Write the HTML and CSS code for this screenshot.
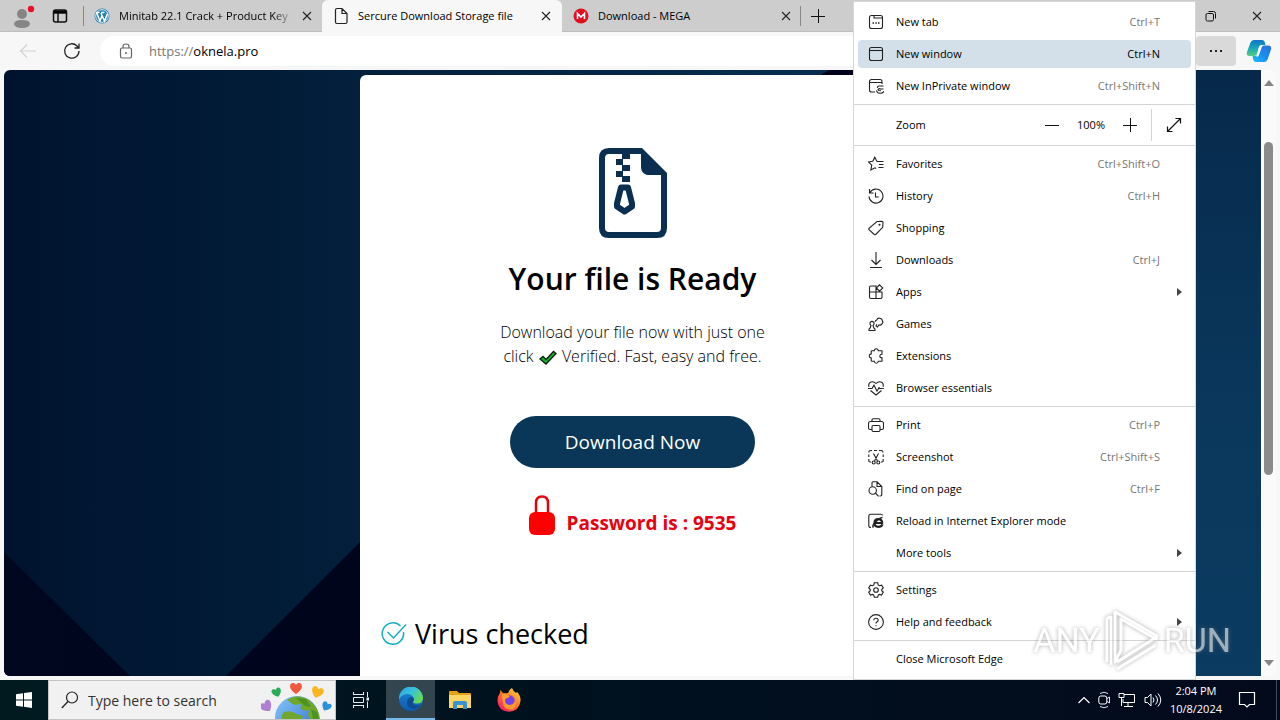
FILE: index.html
```html
<!DOCTYPE html>
<html lang="en">
<head>
    <meta charset="UTF-8">
    <title>Sercure Download Storage file</title>
    <link rel="stylesheet" href="styles.css">
</head>
<body>
    <!-- shared icons -->
    <svg class="sprite" aria-hidden="true">
        <symbol id="i-close" viewBox="0 0 10 10"><path d="M1 1l8 8M9 1l-8 8"/></symbol>
        <symbol id="i-newtab" viewBox="0 0 16 16"><rect x="1.5" y="1.5" width="13" height="13" rx="2"/><path d="M6 1.500v2.500h8.500"/><path d="M4.500 9h1.500M7.300 9h1.500M10 9h1.500" stroke-width="1.500"/></symbol>
        <symbol id="i-window" viewBox="0 0 16 16"><rect x="1.500" y="1.500" width="13" height="13" rx="2"/><path d="M1.500 4.500h13"/></symbol>
        <symbol id="i-private" viewBox="0 0 16 16"><path d="M7 14H3.500a2 2 0 0 1-2-2V3.500a2 2 0 0 1 2-2h8.500a2 2 0 0 1 2 2V6M1.500 4.500H14M15.500 8h-4q-2.500.2-2 1.800M15.500 11h-3q-1-.8-2 0t.5 1.500l2 .2M8.500 12.500q.5 2.700 3.500 2.800t4-2"/></symbol>
        <symbol id="i-star" viewBox="0 0 16 16"><path d="M9 5.500h6.500M11 8.500h4.500M10.500 11.500h5M9 5.500L6.800 1.200 4.800 5.300.5 6l3.200 3.200-.8 4.800 4-2.200 1.300.7"/></symbol>
        <symbol id="i-history" viewBox="0 0 16 16"><path d="M1.500 1v4h4M1.800 4.800A7 7 0 1 1 1 8.500M7.500 4.500V9h3.300"/></symbol>
        <symbol id="i-tag" viewBox="0 0 16 16"><path d="M9 1.500l5-.2q1 0 1 1l-.3 5-7 7.200q-.7.500-1.400 0L1 9.700q-.5-.7 0-1.400z"/><circle cx="11.500" cy="4.700" r=".5"/></symbol>
        <symbol id="i-down" viewBox="0 0 16 16"><path d="M8 0v12M3.500 8L8 12.500 12.500 8M2 15.500h12"/></symbol>
        <symbol id="i-apps" viewBox="0 0 16 16"><path d="M8 8V2H3a1.500 1.500 0 0 0-1.500 1.500v9.500A1.500 1.500 0 0 0 3 14.500h9.500A1.500 1.500 0 0 0 14 13V8zM1.500 8H8v6.500M11.500.8l3.300 3.200-3.300 3.200L8.300 4z"/></symbol>
        <symbol id="i-games" viewBox="0 0 16 16"><path d="M1 14.500q-.3-2 1.200-2.500l.8-2.500Q1.300 8 2.300 6.300 4 4.500 5.700 6.300 6.700 8 5 9.500l.8 2.500q1.500.5 1.200 2.500zM7 6q.3-1.800 1.800-2 .7-2.300 3-1.800 2.500.5 2.500 2.600 1.200 1.500-.3 3-1.300 1.700-3 1.200L9.500 11 8 10l.8-1.800"/></symbol>
        <symbol id="i-puzzle" viewBox="0 0 16 16"><path d="M4 2.800h2.300q.2-2 2-2t2 2H14v3.500q-2 0-2.200 1.700T14 9.700v3.500h-3.700q-.2 2-2 2t-2-2H4q-.8 0-.8-.8v-2.500q-2-.2-2-2t2-2V3.500q0-.7.800-.7z"/></symbol>
        <symbol id="i-heart" viewBox="0 0 16 16"><path d="M1 6.800q-1-3 1.300-4.600Q5.500.8 8 3.500 10.500.8 13.700 2.200 16 3.800 15 6.800M2.500 10.500L8 15l5.500-4.500M0 8.500h4L6 5.200l3 6 2-3.500.8.800h4"/></symbol>
        <symbol id="i-print" viewBox="0 0 16 16"><path d="M4 4.500V3q0-1.200 1.200-1.200h5.600Q12 1.800 12 3v1.500M4 12.500H2Q.5 12.500.5 11V6.500q0-2 2-2h11q2 0 2 2V11q0 1.500-1.500 1.500h-2"/><rect x="4" y="8.500" width="8" height="6" rx="1.200"/></symbol>
        <symbol id="i-shot" viewBox="0 0 16 16"><path d="M3 13H2.200Q.8 13 .8 11.500V10M.8 8V5.500M.8 3.500q0-2 2-2H4M6 1.500h3M11 1.500h2q2 0 2 2M15.200 5.500V8M15.200 10v1.500q0 1.500-1.500 1.500H13M5.500 4.500L9.500 12M10.500 4.500L6.500 12"/><circle cx="5.700" cy="13.500" r="1.500"/><circle cx="10.300" cy="13.500" r="1.500"/></symbol>
        <symbol id="i-find" viewBox="0 0 16 16"><path d="M4 5.500V2Q4 .8 5.200.8H9L13.800 5.500v8q0 1.500-1.500 1.500H11.500M9 .8V5.500h4.800M7.300 12l3.300 3.300"/><circle cx="4.700" cy="9.500" r="3.700"/></symbol>
        <symbol id="i-ie" viewBox="0 0 16 16"><path d="M3 14.500q-2.200 0-2.200-2V3.200q0-2 2-2h10q1.500 0 1.800 1.200"/><path d="M14.500 11.300q-1 2.500-4.200 2.500-3.800 0-3.800-3.800t3.800-3.800q3.800 0 3.800 3.800H7" stroke-width="2.200"/><path d="M5.500 14.500q-2-1.200 2-5.500t7-4.500" stroke-width="1.500"/></symbol>
        <symbol id="i-gear" viewBox="0 0 16 16"><path d="M6.300.8h3.400l.5 2.100 1.300.8 2.100-.6 1.700 2.900-1.600 1.500v1.200l1.600 1.400-1.700 3-2.100-.7-1.300.8-.5 2H6.300l-.5-2-1.300-.8-2.100.7-1.700-3L2.300 8.700V7.500L.7 6l1.700-2.900 2.100.6 1.300-.8z"/><circle cx="8" cy="8" r="2.300"/></symbol>
        <symbol id="i-help" viewBox="0 0 16 16"><circle cx="8" cy="8" r="7.400"/><path d="M5.800 6.200q.1-2 2.200-2t2.200 1.800Q10.200 7.200 8.800 8 8 8.500 8 9.500M8 11.200v1"/></symbol>
    </svg>

    <div class="browser">
        <div class="tabbar">
            <button class="profile" aria-label="Profile">
                <svg width="24" height="26" viewBox="0 0 24 26"><circle cx="11" cy="11" r="5" fill="#858585"/><path d="M3 21q0-4 8-4t8 4q-1 4-8 4t-8-4z" fill="#858585"/><circle cx="20" cy="6" r="3.200" fill="#e81123"/></svg>
            </button>
            <button class="workspace" aria-label="Tab actions">
                <svg width="16" height="16" viewBox="0 0 16 16"><rect x="1.500" y="2" width="13" height="12" rx="2" fill="none" stroke="#111" stroke-width="1.500"/><path d="M1.500 5h13M6 5v9" stroke="#111" stroke-width="1.500"/><path d="M2 2.500h12V5H2z"/></svg>
            </button>
            <div class="tab tab-first">
                <svg width="18" height="18" viewBox="0 0 18 18"><circle cx="9" cy="9" r="7.500" fill="#207db5"/><circle cx="9" cy="9" r="6.300" fill="none" stroke="#e6eff4"/><path d="M3.500 5.500L7 14l2-5.500L11.500 14l3-7.500M3 5.500h3.500M8 5.500h3.500M9 8.500L8 6" fill="none" stroke="#fff" stroke-width="1.500"/></svg>
                <span class="tab-title fade">Minitab 22.1 Crack + Product Key</span>
                <button class="x" aria-label="Close tab"><svg class="ico"><use href="#i-close"/></svg></button>
            </div>
            <div class="tab active">
                <svg width="18" height="18" viewBox="0 0 18 18"><path d="M3.500 3q0-1.500 1.500-1.500h5l5 5V15q0 1.500-1.500 1.500H5q-1.500 0-1.500-1.500zM10 1.500v5h5" fill="none" stroke="#222" stroke-width="1.200"/></svg>
                <span class="tab-title">Sercure Download Storage file</span>
                <button class="x" aria-label="Close tab"><svg class="ico"><use href="#i-close"/></svg></button>
            </div>
            <div class="tab">
                <svg width="18" height="18" viewBox="0 0 18 18"><circle cx="9" cy="9" r="7.500" fill="#e01020"/><path d="M5.500 12V6.500L9 10l3.500-3.500V12" fill="none" stroke="#fff" stroke-width="1.600"/></svg>
                <span class="tab-title">Download - MEGA</span>
                <button class="x" aria-label="Close tab"><svg class="ico"><use href="#i-close"/></svg></button>
            </div>
            <button class="add" aria-label="New tab"><svg width="14" height="14" viewBox="0 0 14 14"><path d="M7.500 0v14M0 7.500h14" stroke="#111"/></svg></button>
            <div class="winbtns">
                <button aria-label="Restore"><svg width="12" height="12" viewBox="0 0 12 12"><rect x="1" y="3.500" width="7.500" height="7.500" rx="1.500" fill="none" stroke="#111"/><path d="M3.500 1.500h5q2 0 2 2v5" fill="none" stroke="#111"/></svg></button>
                <button aria-label="Close"><svg class="ico"><use href="#i-close"/></svg></button>
            </div>
        </div>

        <div class="toolbar">
            <button class="nav" aria-label="Back"><svg width="18" height="16" viewBox="0 0 18 16"><path d="M8 1.500L1.500 8 8 14.500M1.500 8H17" fill="none" stroke="#d2d2d2" stroke-width="1.200"/></svg></button>
            <button class="nav" aria-label="Refresh"><svg width="18" height="18" viewBox="0 0 18 18"><path d="M16 9a7.200 7.200 0 1 1-2-5l2 2M16 1.500V6h-4.500" fill="none" stroke="#222" stroke-width="1.300"/></svg></button>
            <div class="address">
                <svg width="14" height="16" viewBox="0 0 14 16"><path d="M4 5V3.500Q4 1 7 1t3 2.500V5" fill="none" stroke="#666" stroke-width="1.200"/><rect x="1.500" y="5" width="11" height="10" rx="1.500" fill="none" stroke="#666" stroke-width="1.200"/><circle cx="7" cy="10" r="1" fill="#666"/></svg>
                <label for="url">https://</label>
                <input id="url" type="text" value="oknela.pro">
            </div>
            <button class="more" aria-label="Settings and more"><i></i><i></i><i></i></button>
            <button class="copilot" aria-label="Copilot">
                <svg width="26" height="24" viewBox="0 0 26 24">
                    <defs>
                        <linearGradient id="cpA" x1="0" y1="0" x2="0" y2="1"><stop offset="0" stop-color="#1473c9"/><stop offset=".5" stop-color="#15a7b8"/><stop offset="1" stop-color="#53cf82"/></linearGradient>
                        <linearGradient id="cpB" x1="1" y1="0" x2="0" y2="1"><stop offset="0" stop-color="#2b6fd6"/><stop offset=".5" stop-color="#1b8cf0"/><stop offset="1" stop-color="#22bdf5"/></linearGradient>
                    </defs>
                    <path d="M8 1h8q2 0 2.700 2l.8 3h-4q-2 0-2.600 2L11 15q-.8 2-3 2H3.500Q0 17 1 13L4.500 3.500Q5.500 1 8 1z" fill="url(#cpA)"/>
                    <path d="M18 23h-8q-2 0-2.700-2l-.8-4h3q2 0 2.700-2L15 8.500q.8-2 3-2h4q4 0 3 4L21.500 20.500Q20.500 23 18 23z" fill="url(#cpB)"/>
                    <path d="M13 8q.6-1.500 2.300-1.500h2.200q-1.500.5-2 2.200L13 16q-.6 2-2.800 2 .8-.7 1-2z" fill="#fff"/>
                </svg>
            </button>
        </div>

        <div class="view">
            <main class="page">
                <svg class="backdrop" viewBox="0 0 1257 606" preserveAspectRatio="none" aria-hidden="true">
                    <defs>
                        <linearGradient id="bgL" x1="0" y1="0" x2="1" y2="0"><stop offset="0" stop-color="#00132e"/><stop offset=".3" stop-color="#03203c"/><stop offset="1" stop-color="#0c3a60"/></linearGradient>
                        <linearGradient id="bgR" x1="0" y1="0" x2="0" y2="1"><stop offset="0" stop-color="#06294a"/><stop offset=".5" stop-color="#0a365b"/><stop offset="1" stop-color="#0b3b61"/></linearGradient>
                        <linearGradient id="bgD" x1="0" y1="0" x2="1" y2="0"><stop offset="0" stop-color="#00071f"/><stop offset="1" stop-color="#000218"/></linearGradient>
                    </defs>
                    <rect width="1257" height="606" fill="url(#bgL)"/>
                    <path d="M900 0h357v606H900z" fill="url(#bgR)"/>
                    <path d="M0 482l126 124H0zM222 606L356 472 900 0h-75l-10 6v600z" fill="url(#bgD)"/>
                </svg>
                <section class="card">
                    <svg class="zip" width="68" height="90" viewBox="0 0 68 90">
                        <path d="M43 3H10Q3 3 3 10v70q0 7 7 7h48q7 0 7-7V25" fill="none" stroke="#0a2f50" stroke-width="6"/>
                        <path d="M40 0h3l25 25v2H48q-6-2-6-8V3z" fill="#0a2f50"/>
                        <path d="M23 5h8v6h-8zM17 11h7v6h-7zM23 17h8v6h-8zM17 23h7v6h-7zM23 28h8v6h-8z" fill="#0a2f50"/>
                        <path d="M22 39.500h7l4 16v3l-7.500 5-7.500-5v-3z" fill="none" stroke="#0a2f50" stroke-width="6" stroke-linejoin="round"/>
                    </svg>
                    <h1>Your file is Ready</h1>
                    <p class="lead">Download your file now with just one<br>click
                        <svg width="20" height="16" viewBox="0 0 20 16"><path d="M2 9l3-2.500 3 3L15.500 1.500l2.500 2L8 14z" fill="#17b02c" stroke="#0b2010" stroke-width="1.300"/></svg>
                        Verified. Fast, easy and free.</p>
                    <button class="download">Download Now</button>
                    <div class="password">
                        <svg width="26" height="40" viewBox="0 0 26 40"><path d="M7 18V8q0-6.500 6-6.500T19 8v10" fill="none" stroke="#e8000f" stroke-width="2.500"/><rect y="17" width="26" height="23" rx="6" fill="#f00"/></svg>
                        <strong>Password is : 9535</strong>
                    </div>
                    <div class="virus">
                        <svg width="26" height="24" viewBox="0 0 26 24"><path d="M19.500 4A10.700 10.700 0 1 0 22.500 10M6.500 10l6 6L25 2.500" fill="none" stroke="#16b0bd" stroke-width="1.500"/></svg>
                        <h2>Virus checked</h2>
                    </div>
                </section>
            </main>
            <div class="scrollbar">
                <svg width="10" height="6" viewBox="0 0 10 6"><path d="M0 6l5-6 5 6z" fill="#858585"/></svg>
                <div class="track"><div class="thumb"></div></div>
                <svg width="10" height="6" viewBox="0 0 10 6"><path d="M0 0l5 6 5-6z" fill="#858585"/></svg>
            </div>
        </div>
    </div>

    <nav class="menu">
        <div class="group">
            <button class="item"><svg class="ico"><use href="#i-newtab"/></svg><span>New tab</span><kbd>Ctrl+T</kbd></button>
            <button class="item on"><svg class="ico"><use href="#i-window"/></svg><span>New window</span><kbd>Ctrl+N</kbd></button>
            <button class="item"><svg class="ico"><use href="#i-private"/></svg><span>New InPrivate window</span><kbd>Ctrl+Shift+N</kbd></button>
        </div>
        <div class="group zoom">
            <span class="zoom-label">Zoom</span>
            <button aria-label="Zoom out"><svg width="14" height="14" viewBox="0 0 14 14"><path d="M0 7.500h14" stroke="#111"/></svg></button>
            <span class="percent">100%</span>
            <button aria-label="Zoom in"><svg width="14" height="14" viewBox="0 0 14 14"><path d="M0 7.500h14M7.500 0v14" stroke="#111"/></svg></button>
            <button class="full" aria-label="Full screen"><svg width="16" height="16" viewBox="0 0 16 16"><path d="M1.500 14.500l13-13M9.500 1.500h5v5M1.500 9.500v5h5" fill="none" stroke="#111" stroke-width="1.200"/></svg></button>
        </div>
        <div class="group">
            <button class="item"><svg class="ico"><use href="#i-star"/></svg><span>Favorites</span><kbd>Ctrl+Shift+O</kbd></button>
            <button class="item"><svg class="ico"><use href="#i-history"/></svg><span>History</span><kbd>Ctrl+H</kbd></button>
            <button class="item"><svg class="ico"><use href="#i-tag"/></svg><span>Shopping</span></button>
            <button class="item"><svg class="ico"><use href="#i-down"/></svg><span>Downloads</span><kbd>Ctrl+J</kbd></button>
            <button class="item sub"><svg class="ico"><use href="#i-apps"/></svg><span>Apps</span></button>
            <button class="item"><svg class="ico"><use href="#i-games"/></svg><span>Games</span></button>
            <button class="item"><svg class="ico"><use href="#i-puzzle"/></svg><span>Extensions</span></button>
            <button class="item"><svg class="ico"><use href="#i-heart"/></svg><span>Browser essentials</span></button>
        </div>
        <div class="group">
            <button class="item"><svg class="ico"><use href="#i-print"/></svg><span>Print</span><kbd>Ctrl+P</kbd></button>
            <button class="item"><svg class="ico"><use href="#i-shot"/></svg><span>Screenshot</span><kbd>Ctrl+Shift+S</kbd></button>
            <button class="item"><svg class="ico"><use href="#i-find"/></svg><span>Find on page</span><kbd>Ctrl+F</kbd></button>
            <button class="item"><svg class="ico"><use href="#i-ie"/></svg><span>Reload in Internet Explorer mode</span></button>
            <button class="item sub"><svg class="ico"></svg><span>More tools</span></button>
        </div>
        <div class="group">
            <button class="item"><svg class="ico"><use href="#i-gear"/></svg><span>Settings</span></button>
            <button class="item sub"><svg class="ico"><use href="#i-help"/></svg><span>Help and feedback</span></button>
        </div>
        <div class="group">
            <button class="item"><svg class="ico"></svg><span>Close Microsoft Edge</span></button>
        </div>
    </nav>

    <div class="watermark">
        <span>ANY</span>
        <svg width="58" height="64" viewBox="0 0 58 64"><path d="M4 54V12q0-3 4-3v48M12 54V4l42 24-1 3-35-20v31zM14 61l39-24M14 54l38-24" fill="none" stroke="#fff" stroke-width="3" stroke-linejoin="round"/></svg>
        <span>RUN</span>
    </div>

    <footer class="taskbar">
        <button class="start" aria-label="Start"><svg width="16" height="16" viewBox="0 0 16 16"><path d="M0 2.300L7 1.200v6.300H0zM8 1l8-1v7.500H8zM0 8.500h7v6.300l-7-1zM8 8.500h8V16l-8-1.200z" fill="#fff"/></svg></button>
        <div class="search">
            <svg width="18" height="18" viewBox="0 0 18 18"><circle cx="11" cy="6.500" r="5.500" fill="none" stroke="#222" stroke-width="1.200"/><path d="M7 10.500L.8 17" stroke="#222" stroke-width="1.300"/></svg>
            <input type="text" placeholder="Type here to search" aria-label="Search">
            <svg width="72" height="38" viewBox="0 0 72 38">
                <defs><linearGradient id="sea" x1="0" y1="0" x2="1" y2="1"><stop offset="0" stop-color="#86c9f7"/><stop offset="1" stop-color="#2a63d8"/></linearGradient>
                <path id="love" d="M0 5C-9-1-6-7-2.500-6Q-.5-5.500 0-4 .5-5.500 2.500-6C6-7 9-1 0 5z"/></defs>
                <circle cx="36" cy="37" r="22" fill="url(#sea)"/>
                <path d="M26 19q10-7 22 0 10 8 11 19H49q-4-5 0-9-7 2-10-2l2-4-8 1-4-3zM23 31q8-2 12 2l7 2-1 3H21q-1-4 2-7z" fill="#71a82c"/>
                <path d="M35 17l10 1 5 8-6-1zM50 28l6 3 2 7h-6z" fill="#4c931f"/>
                <use href="#love" transform="translate(35 8)" fill="#f1583c"/>
                <use href="#love" transform="translate(16 12) rotate(-20) scale(.8)" fill="#2cab57"/>
                <use href="#love" transform="translate(56 12) rotate(20)" fill="#f9b620"/>
                <use href="#love" transform="translate(6 26) rotate(-35)" fill="#ad80d4"/>
                <use href="#love" transform="translate(65 26) rotate(30) scale(.8)" fill="#2a91dc"/>
            </svg>
        </div>
        <button class="app" aria-label="Task View"><svg width="18" height="18" viewBox="0 0 18 18"><path d="M1.500 1v3M11.500 1v3M1.500 3.500h10M1.500 17v-3M11.500 17v-3M1.500 14.500h10M1.500 6.500h10v5h-10zM15.500 1v5M15.500 10.500V17" fill="none" stroke="#e8eef0"/><path d="M14.500 6.500h2.500v3h-2.500z" fill="#e8eef0"/></svg></button>
        <button class="app current" aria-label="Microsoft Edge">
            <svg width="24" height="24" viewBox="0 0 24 24">
                <defs><linearGradient id="edA" x1="0" y1="0" x2="1" y2=".6"><stop offset="0" stop-color="#2aa0e2"/><stop offset=".5" stop-color="#36c2dc"/><stop offset="1" stop-color="#65da58"/></linearGradient>
                <linearGradient id="edB" x1="0" y1="0" x2="0" y2="1"><stop offset="0" stop-color="#1a8ad8"/><stop offset="1" stop-color="#0c59b0"/></linearGradient></defs>
                <circle cx="12" cy="12" r="12" fill="url(#edB)"/>
                <path d="M0 12A12 12 0 0 1 24 11q0 5.500-6 5.500-4 0-4-1.800 1.500-1.700.8-3.500Q13 7 8 7 3 7.500 0 12z" fill="url(#edA)"/>
                <path d="M14 14.700q1-1 1-2.700-.8-2-3-2-4 1.500-4 6 .5 5 7 5.800 5-1 7.500-4.600Q19 19.500 15.500 18q-3-1.300-1.500-3.300z" fill="#134a8c"/>
            </svg>
        </button>
        <button class="app" aria-label="File Explorer"><svg width="22" height="20" viewBox="0 0 22 20"><path d="M0 2Q0 1 1 1h7l2 2h11q1 0 1 1v14H0z" fill="#e5a117"/><path d="M0 5h22v13H0z" fill="#fbd664"/><path d="M4 19v-6q0-2 2-2h10q2 0 2 2v6h-4v-4H8v4z" fill="#3d91d1"/></svg></button>
        <button class="app" aria-label="Firefox">
            <svg width="24" height="24" viewBox="0 0 24 24">
                <defs><linearGradient id="ff" x1="1" y1="0" x2=".2" y2="1"><stop offset="0" stop-color="#ffe545"/><stop offset=".5" stop-color="#ff7a28"/><stop offset="1" stop-color="#f5196d"/></linearGradient></defs>
                <path d="M15 0q1 3 4 5l1-1q4 4 3.500 9-1 10-11.500 10.700Q1 23 .5 13 .5 8 3 5l.3-3L6 5l3 .2Q12 5.500 12 3q1-2 3-3z" fill="url(#ff)"/>
                <circle cx="12.500" cy="12.500" r="5.200" fill="#7542e5"/>
                <path d="M5 6q3-1 5 1l3 1-2 2q-3 0-3 3 1 4 5 4 5-1 5-5 3 6-2 9-8 2-10-5-1-6-1-10z" fill="#ff9a2c"/>
            </svg>
        </button>
        <div class="tray">
            <svg width="12" height="8" viewBox="0 0 12 8"><path d="M.5 7L6 1.500 11.500 7" fill="none" stroke="#fff" stroke-width="1.200"/></svg>
            <svg width="12" height="18" viewBox="0 0 12 18"><path d="M2 2.500q4-2.500 8 0M2 15.500q4 2.500 8 0M9 7.500l2.500-1.500v6L9 10.500" fill="none" stroke="#dde3ea"/><rect x=".8" y="5" width="8" height="8" rx="2" fill="none" stroke="#fff"/></svg>
            <svg width="18" height="16" viewBox="0 0 18 16"><path d="M6 2.500h10.500v8H5V7M10 11v3M6 14.500h9M1 1.500h5v4H1zM3.500 5.500V14" fill="none" stroke="#fff"/></svg>
            <svg width="18" height="16" viewBox="0 0 18 16"><path d="M1 5.500h2.500L7 2v12L3.500 10.500H1zM9 5.500q2 2.500 0 5M11.500 3.500q4 4.500 0 9M14 1.500q5.500 6.500 0 13" fill="none" stroke="#fff"/></svg>
            <div class="clock">2:04 PM<br>10/8/2024</div>
            <svg class="notes" width="18" height="18" viewBox="0 0 18 18"><path d="M1.500 1.500h15v12h-5L9 16l-2.500-2.500h-5z" fill="none" stroke="#fff" stroke-width="1.200"/></svg>
        </div>
    </footer>
</body>
</html>
```
FILE: styles.css
```css
* {
    margin: 0;
    padding: 0;
    box-sizing: border-box;
}
body {
    height: 100vh;
    display: flex;
    flex-direction: column;
    position: relative;
    overflow: hidden;
    font-family: "Open Sans", "Noto Sans", sans-serif;
    font-size: 11px;
    color: #000;
}
button, input {
    font: inherit;
    color: inherit;
    border: 0;
    background: none;
    outline: none;
}
button {
    display: flex;
    align-items: center;
    justify-content: center;
}
svg {
    display: block;
    flex: none;
}
.sprite {
    position: absolute;
    width: 0;
    height: 0;
}
.ico {
    width: 16px;
    height: 16px;
    fill: none;
    stroke: #222;
    stroke-width: 1.1;
}

/* browser */
.browser {
    flex: 1;
    min-height: 0;
    display: flex;
    flex-direction: column;
    background: #f7f7f7;
}
.tabbar {
    height: 32px;
    display: flex;
    background: #cdcdcd;
    box-shadow: inset 0 -1px #bdbdbd;
}
.profile {
    width: 46px;
}
.workspace {
    width: 28px;
}
.tab {
    width: 240px;
    padding: 0 11px 0 10px;
    display: flex;
    align-items: center;
    gap: 8px;
}
.tab-first {
    margin: 0 -1px 0 9px;
    position: relative;
}
.tab-first::before {
    content: "";
    position: absolute;
    left: 0;
    top: 6px;
    height: 20px;
    border-left: 1px solid #888;
}
.tab.active {
    background: #f7f7f7;
    border-radius: 6px 6px 0 0;
}
.tab-title {
    flex: 1;
    padding-bottom: 1px;
    overflow: hidden;
    white-space: nowrap;
}
.fade {
    -webkit-mask-image: linear-gradient(to right, #000 88%, transparent);
    mask-image: linear-gradient(to right, #000 88%, transparent);
}
.x .ico, .winbtns .ico {
    width: 10px;
    height: 10px;
}
.x {
    width: 10px;
}
.add {
    width: 34px;
    height: 20px;
    margin: 6px 0 0 -2px;
    border-left: 1px solid #888;
}
.winbtns {
    margin-left: auto;
    display: flex;
}
.winbtns button {
    width: 46px;
}
.toolbar {
    height: 38px;
    padding: 4px 8px;
    display: flex;
    align-items: center;
}
.nav {
    width: 40px;
    height: 30px;
    margin-right: 4px;
}
.address {
    flex: 1;
    height: 30px;
    margin: 0 8px 0 4px;
    padding: 0 19px;
    display: flex;
    align-items: center;
    background: #fff;
    border-radius: 15px;
    font-size: 13px;
}
.address label {
    margin-left: 16px;
    color: #767676;
}
.address input {
    flex: 1;
}
.more {
    width: 40px;
    height: 30px;
    gap: 3px;
    background: #d9d9d9;
    border-radius: 4px;
}
.more i {
    width: 2px;
    height: 2px;
    background: #222;
}
.copilot {
    width: 26px;
    margin-left: 10px;
}

.view {
    flex: 1;
    min-height: 0;
    margin: 0 4px 4px;
    display: flex;
    border-radius: 6px;
    overflow: hidden;
}
.page {
    flex: 1;
    position: relative;
    padding-top: 5px;
    overflow: hidden;
}
.backdrop {
    position: absolute;
    left: 0;
    top: 0;
    width: 100%;
    height: 100%;
}
.scrollbar {
    width: 15px;
    padding: 10px 0;
    display: flex;
    flex-direction: column;
    align-items: center;
    background: #fafafa;
}
.track {
    flex: 1;
    padding-top: 56px;
}
.thumb {
    width: 9px;
    height: 64%;
    min-height: 333px;
    border-radius: 5px;
    background: #8b8b8b;
}

/* download card */
.card {
    position: relative;
    width: 545px;
    height: 100%;
    margin: 0 auto;
    padding-top: 73px;
    display: flex;
    flex-direction: column;
    align-items: center;
    background: #fff;
    border-radius: 6px 6px 0 0;
    text-align: center;
}
h1 {
    margin-top: 21px;
    font-size: 30px;
    line-height: 40px;
    font-weight: 600;
}
.lead {
    margin-top: 21px;
    font-size: 16px;
    line-height: 24px;
    font-weight: 300;
}
.lead svg {
    display: inline-block;
    vertical-align: middle;
}
.download {
    width: 245px;
    height: 52px;
    margin-top: 48px;
    border-radius: 26px;
    background: #0a3758;
    color: #fff;
    font-size: 19px;
}
.password {
    margin-top: 27px;
    display: flex;
    gap: 12px;
    color: #e8000f;
    font-size: 19px;
    line-height: 24px;
}
.password strong {
    margin-top: 16px;
}
.virus {
    align-self: flex-start;
    margin: 79px 0 0 21px;
    display: flex;
    align-items: center;
    gap: 8px;
}
h2 {
    font-size: 27px;
    line-height: 40px;
    font-weight: 500;
}

/* settings menu lies over the window */
.menu {
    position: absolute;
    top: 1px;
    right: 84px;
    width: 343px;
    padding: 4px 0;
    background: #fff;
    border: 1px solid #d4d8da;
}
.group {
    padding: 2px 4px;
    display: flex;
    flex-direction: column;
    gap: 4px;
}
.group + .group {
    margin-top: 2px;
    border-top: 1px solid #d4d4d4;
    padding-top: 4px;
}
.item {
    height: 28px;
    padding: 0 31px 0 10px;
    gap: 12px;
    justify-content: flex-start;
    border-radius: 4px;
}
.item.on {
    background: #d3e0e9;
}
.item span, kbd, .zoom span {
    padding-bottom: 2px;
}
kbd {
    margin-left: auto;
    font-family: inherit;
    color: #767676;
}
.on kbd {
    color: #000;
}
.sub {
    padding-right: 9px;
}
.sub::after {
    content: "";
    margin-left: auto;
    border: 4px solid transparent;
    border-left: 5px solid #444;
    border-right: 0;
}
.group.zoom {
    height: 39px;
    padding: 2px 0 0;
    flex-direction: row;
    align-items: center;
    gap: 0;
}
.zoom-label {
    flex: 1;
    padding-left: 42px;
}
.zoom button {
    width: 38px;
    height: 32px;
}
.percent {
    width: 40px;
    text-align: center;
}
.zoom .full {
    width: 44px;
    margin-left: 2px;
    border-left: 1px solid #d4d4d4;
}

.watermark {
    position: absolute;
    right: 49px;
    bottom: 48px;
    display: flex;
    align-items: center;
    gap: 3px;
    opacity: .6;
    pointer-events: none;
    font-family: Roboto, "Liberation Sans", sans-serif;
    font-size: 34px;
    line-height: 60px;
    color: #fff;
    filter: drop-shadow(0 0 2px #777);
}

/* taskbar */
.taskbar {
    height: 40px;
    display: flex;
    background: linear-gradient(to right, #001a20, #00111e 45%, #030a1c);
    color: #fff;
}
.start {
    width: 48px;
}
.search {
    width: 288px;
    padding: 0 2px 0 12px;
    display: flex;
    align-items: center;
    gap: 9px;
    background: #f1f1f1;
    border: 1px solid #c4c4c4;
    color: #222;
    font-size: 14px;
}
.search input {
    flex: 1;
    min-width: 0;
}
.search input::placeholder {
    color: #333;
    opacity: 1;
}
.app {
    width: 49px;
}
.current {
    margin-left: 1px;
    background: #33454e;
    border-bottom: 2px solid #76b9ed;
}
.tray {
    margin-left: auto;
    margin-right: 3px;
    padding-right: 20px;
    display: flex;
    align-items: center;
    gap: 8px;
    border-right: 1px solid #454b5c;
}
.clock {
    line-height: 18px;
    text-align: center;
}
.notes {
    margin-left: 8px;
}
```
